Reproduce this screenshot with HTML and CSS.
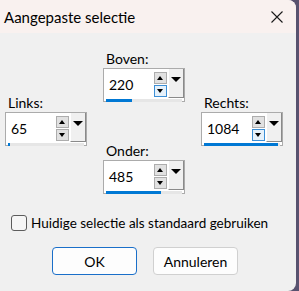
FILE: index.html
```html
<!DOCTYPE html>
<html lang="nl">
<head>
  <meta charset="UTF-8">
  <title>Aangepaste selectie</title>
  <link rel="stylesheet" href="styles.css">
</head>
<body>
<div class="window">
  <div class="titlebar">
    <span class="title">Aangepaste selectie</span>
    <svg class="close" width="12" height="12" viewBox="0 0 12 12">
      <path d="M0.5 0.5 L11.5 11.5 M11.5 0.5 L0.5 11.5" stroke="#1a1a1a" stroke-width="1.1" fill="none"/>
    </svg>
  </div>
  <div class="content">
    <div class="fields">
      <!-- boven -->
      <div class="group top">
        <label>Boven:</label>
        <div class="spin">
          <div class="spin-row">
            <span class="value">220</span>
            <span class="arrows"><span class="arrow up"></span><span class="arrow down hot"></span></span>
            <span class="drop"></span>
          </div>
          <div class="track"><div class="fill" style="width:34%"></div></div>
        </div>
      </div>
      <!-- links -->
      <div class="group left">
        <label>Links:</label>
        <div class="spin">
          <div class="spin-row">
            <span class="value">65</span>
            <span class="arrows"><span class="arrow up"></span><span class="arrow down"></span></span>
            <span class="drop"></span>
          </div>
          <div class="track"><div class="fill" style="width:3%"></div></div>
        </div>
      </div>
      <!-- rechts -->
      <div class="group right">
        <label>Rechts:</label>
        <div class="spin">
          <div class="spin-row">
            <span class="value">1084</span>
            <span class="arrows"><span class="arrow up"></span><span class="arrow down hot"></span></span>
            <span class="drop"></span>
          </div>
          <div class="track"><div class="fill" style="width:97%"></div></div>
        </div>
      </div>
      <!-- onder -->
      <div class="group bottom">
        <label>Onder:</label>
        <div class="spin">
          <div class="spin-row">
            <span class="value">485</span>
            <span class="arrows"><span class="arrow up"></span><span class="arrow down"></span></span>
            <span class="drop"></span>
          </div>
          <div class="track"><div class="fill" style="width:72%"></div></div>
        </div>
      </div>
    </div>

    <label class="check"><span class="checkbox"></span>Huidige selectie als standaard gebruiken</label>

    <div class="buttons">
      <button class="btn primary">OK</button>
      <button class="btn">Annuleren</button>
    </div>
  </div>
</div>
</body>
</html>
```

FILE: styles.css
```css
    body {
      margin: 0;
      background: #58526f;
      font-family: 'Lato', 'Noto Sans', sans-serif;
      color: #000;
      height: 291px;
      overflow: hidden;
    }
    .window {
      width: 296px;
      height: 291px;
      background: #f0f0f0;
      border-radius: 0 8px 8px 0;
      overflow: hidden;
    }
    .titlebar {
      height: 33px;
      background: #f9f1ef;
      display: flex;
      align-items: center;
      justify-content: space-between;
      padding: 0 13px 0 4px;
    }
    .title {
      font-size: 15px;
      margin-top: 1px;
    }
    .close {
      display: block;
    }
    .content {
      padding: 18px 0 0 5px;
    }
    .fields {
      display: grid;
      grid-template-columns: 82px 82px 82px;
      grid-template-rows: 44px 48px auto;
      column-gap: 16px;
    }
    .group {
      display: flex;
      flex-direction: column;
    }
    .group.top { grid-column: 2; grid-row: 1 / 3; }
    .group.left { grid-column: 1; grid-row: 2 / 4; }
    .group.right { grid-column: 3; grid-row: 2 / 4; }
    .group.bottom { grid-column: 2; grid-row: 3; }
    .group label {
      font-size: 14px;
      line-height: 15px;
      margin: 0 0 2px 3px;
    }
    .spin {
      width: 82px;
      height: 34px;
      box-sizing: border-box;
      border: 1px solid #ababab;
      background: #fff;
    }
    .spin-row {
      height: 29px;
      display: flex;
      align-items: center;
    }
    .value {
      flex: 1;
      font-size: 14px;
      padding-left: 5px;
      padding-top: 1px;
    }
    .arrows {
      display: flex;
      flex-direction: column;
      gap: 1px;
      margin-right: 1px;
      padding-top: 2px;
    }
    .arrow {
      width: 11px;
      height: 10px;
      border: 1px solid #adadad;
      background: #e1e1e1;
      position: relative;
    }
    .arrow::after {
      content: '';
      position: absolute;
      left: 2px;
      border-left: 3.5px solid transparent;
      border-right: 3.5px solid transparent;
    }
    .arrow.up::after {
      top: 3px;
      border-bottom: 4px solid #000;
    }
    .arrow.down::after {
      top: 3px;
      border-top: 4px solid #000;
    }
    .arrow.hot {
      background: #e5f1fb;
      border-color: #3c8fd6;
    }
    .drop {
      align-self: stretch;
      width: 14px;
      background: #f0f0f0;
      border-left: 1px solid #fff;
      border-right: 1px solid #8a8a8a;
      border-bottom: 1px solid #8a8a8a;
      position: relative;
    }
    .drop::after {
      content: '';
      position: absolute;
      left: 2px;
      top: 8px;
      border-left: 5px solid transparent;
      border-right: 5px solid transparent;
      border-top: 5px solid #000;
    }
    .track {
      height: 3px;
      margin: 1px 2px 0 2px;
      background: #e6e6e6;
    }
    .fill {
      height: 100%;
      background: #0078d4;
    }
    .check {
      display: flex;
      align-items: center;
      gap: 4px;
      margin: 21px 0 0 6px;
      font-size: 13.5px;
      white-space: nowrap;
    }
    .checkbox {
      width: 14px;
      height: 14px;
      border: 1px solid #5c5c5c;
      border-radius: 3px;
      background: #f6f6f6;
    }
    .buttons {
      display: flex;
      gap: 16px;
      margin: 16px 0 0 47px;
    }
    .btn {
      width: 85px;
      height: 28px;
      font-family: inherit;
      font-size: 14px;
      color: #000;
      background: #fdfdfd;
      border: 1px solid #d0d0d0;
      border-radius: 4px;
      padding: 0;
    }
    .btn.primary {
      border-color: #1a6fc9;
    }
```
